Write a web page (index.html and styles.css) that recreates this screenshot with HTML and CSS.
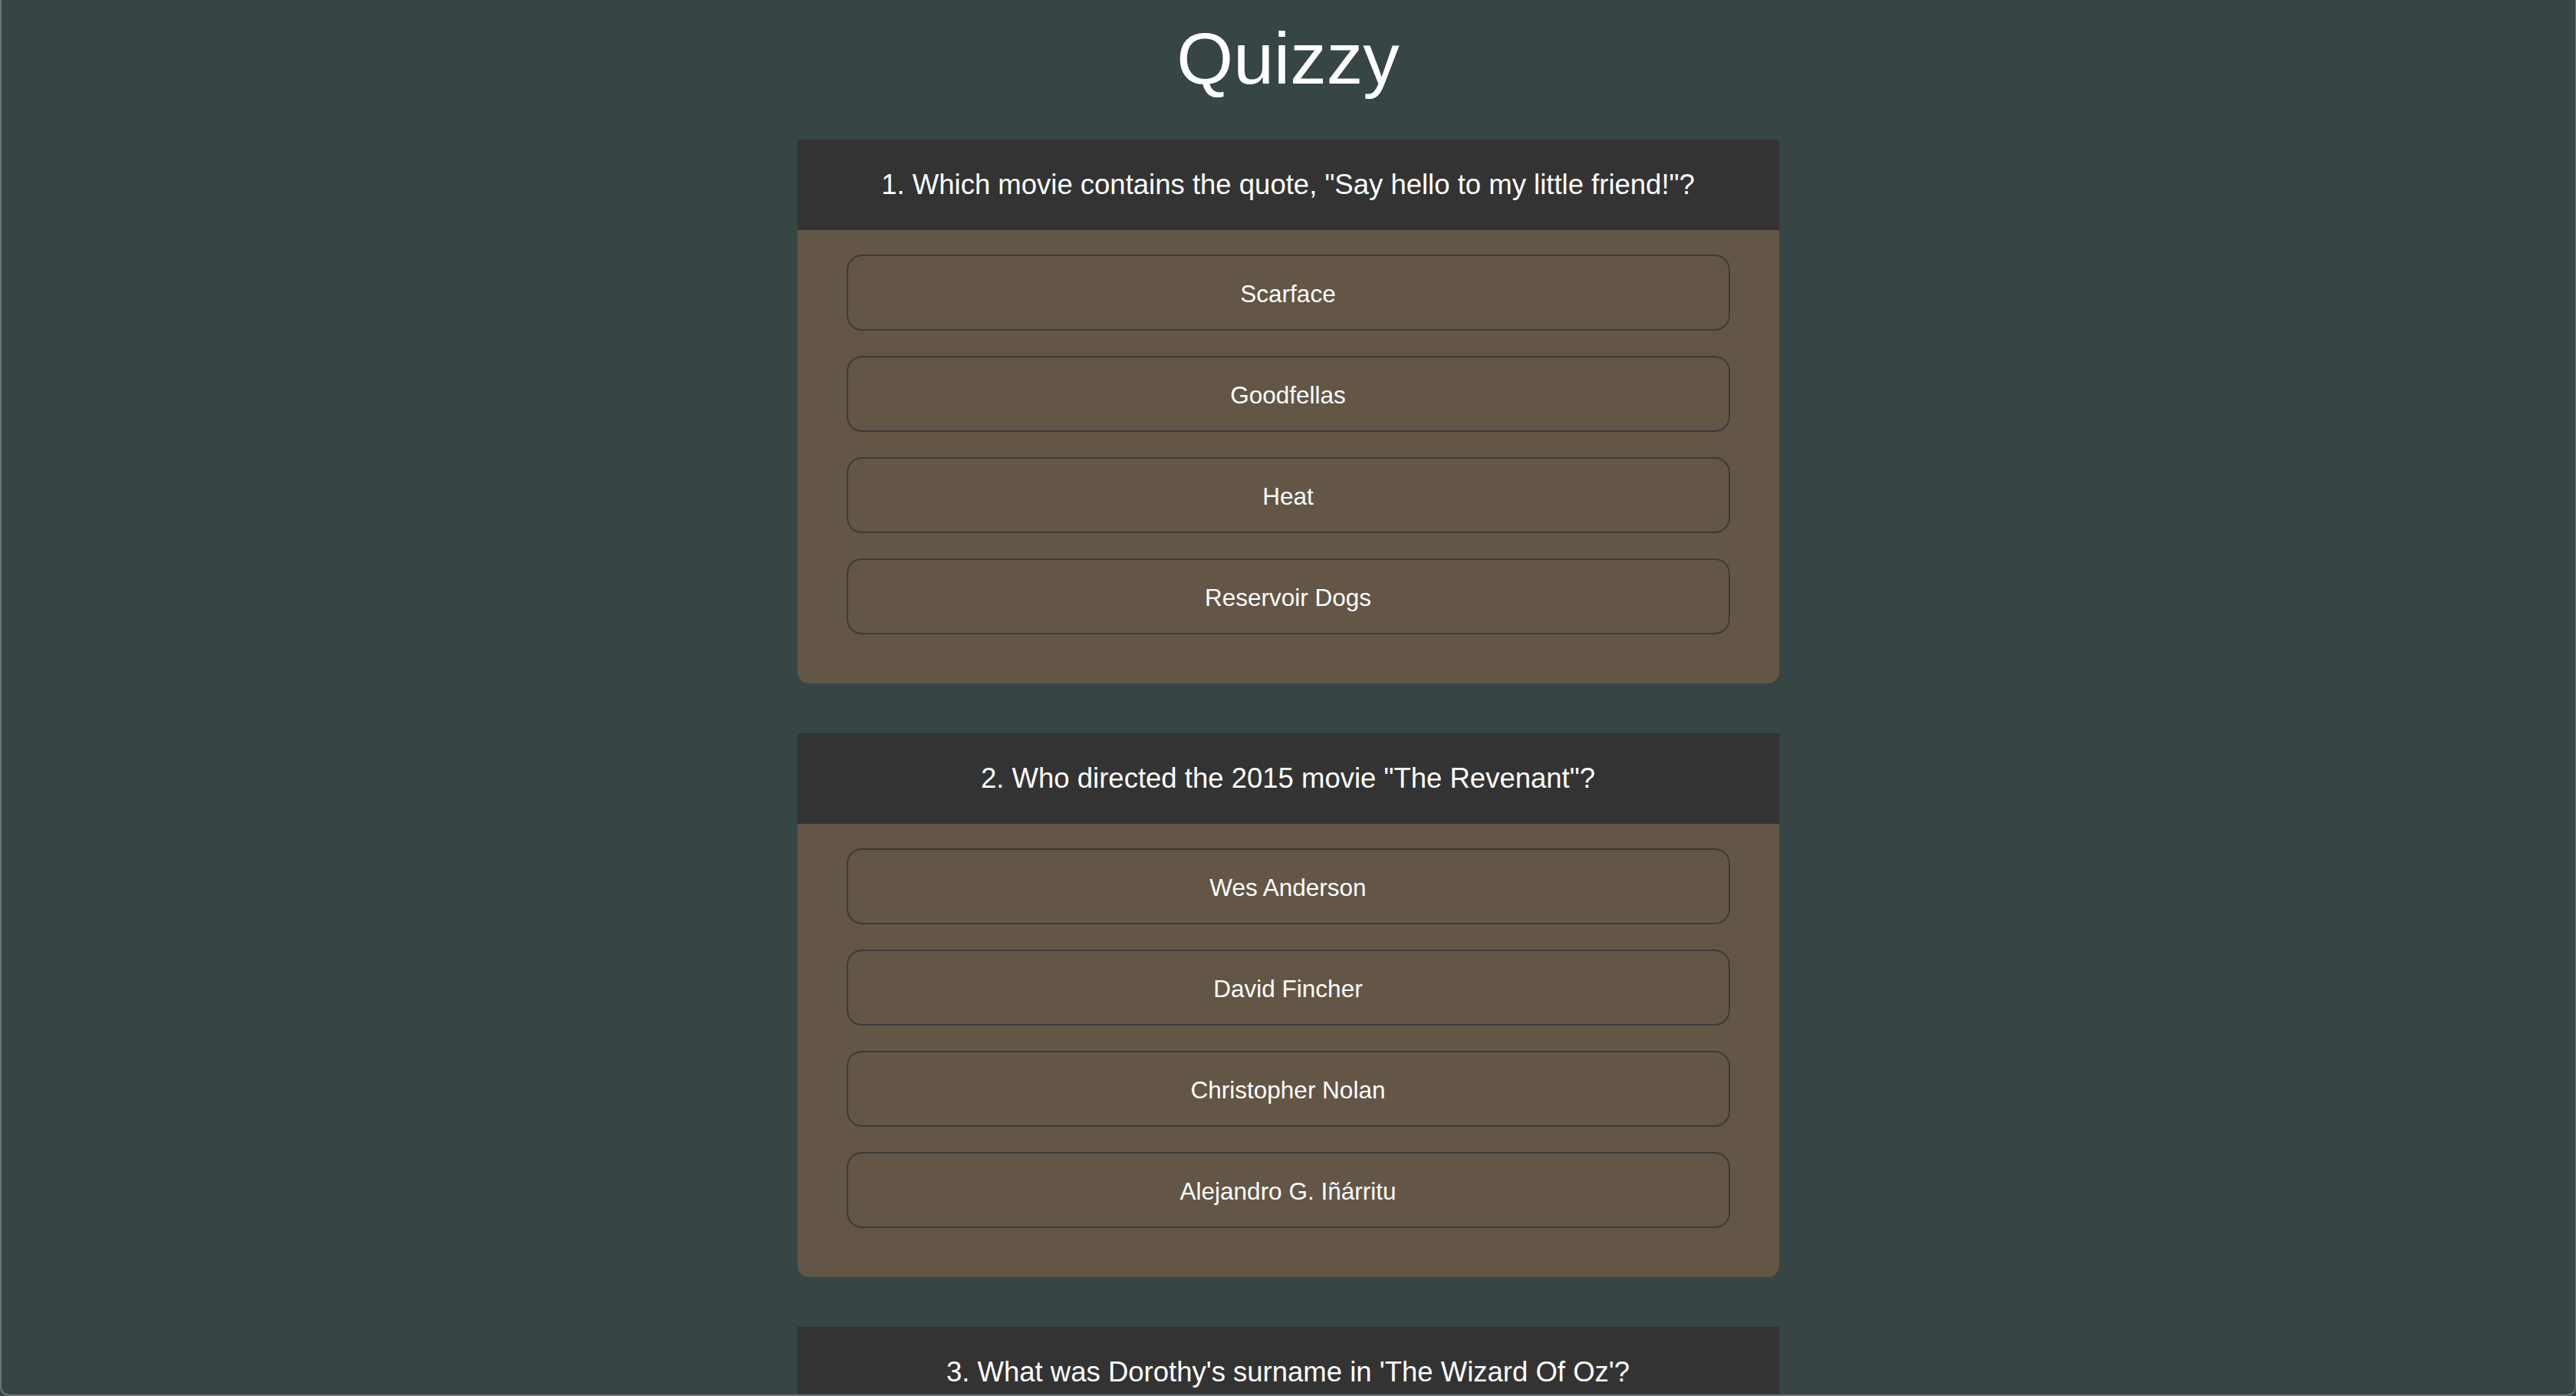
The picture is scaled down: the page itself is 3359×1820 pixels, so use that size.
FILE: index.html
```html
<!DOCTYPE html>
<html lang="en">
<head>
<meta charset="utf-8">
<title>Quizzy</title>
<link rel="stylesheet" href="styles.css">
</head>
<body>
<h1 class="title">Quizzy</h1>
<main class="quiz">
  <section class="card">
    <div class="question">1. Which movie contains the quote, "Say hello to my little friend!"?</div>
    <div class="answers">
      <button class="answer">Scarface</button>
      <button class="answer">Goodfellas</button>
      <button class="answer">Heat</button>
      <button class="answer">Reservoir Dogs</button>
    </div>
  </section>
  <section class="card">
    <div class="question">2. Who directed the 2015 movie "The Revenant"?</div>
    <div class="answers">
      <button class="answer">Wes Anderson</button>
      <button class="answer">David Fincher</button>
      <button class="answer">Christopher Nolan</button>
      <button class="answer">Alejandro G. Iñárritu</button>
    </div>
  </section>
  <section class="card">
    <div class="question">3. What was Dorothy's surname in 'The Wizard Of Oz'?</div>
    <div class="answers"></div>
  </section>
</main>
</body>
</html>
```
FILE: styles.css
```css
html, body {
  margin: 0;
  padding: 0;
  background: #374545;
  color: #ffffff;
  font-family: "Liberation Sans", Arial, Helvetica, sans-serif;
}

body::after {
  content: "";
  position: fixed;
  inset: 0;
  border-left: 2px solid #6c7676;
  border-right: 1px solid #6c7676;
  border-bottom: 2px solid #6c7676;
  border-radius: 0 0 12px 12px;
  pointer-events: none;
}

.title {
  margin: 21px 0 51px;
  font-size: 95px;
  line-height: 110px;
  font-weight: 400;
  text-align: center;
}

.quiz {
  display: flex;
  flex-direction: column;
  align-items: center;
  gap: 65px;
}

.card {
  width: 1280px;
  background: #635646;
  border-radius: 0 0 15px 15px;
}

.question {
  height: 118px;
  background: #333333;
  display: flex;
  align-items: center;
  justify-content: center;
  font-size: 36.5px;
}

.answers {
  display: flex;
  flex-direction: column;
  align-items: center;
  gap: 33px;
  padding: 32px 0 64px;
}

.answer {
  width: 1152px;
  height: 99px;
  padding: 3px 0 0;
  background: transparent;
  border: 2px solid #3b3b3b;
  border-radius: 20px;
  color: #ffffff;
  font-family: "Liberation Sans", Arial, Helvetica, sans-serif;
  font-size: 31.5px;
}
```
